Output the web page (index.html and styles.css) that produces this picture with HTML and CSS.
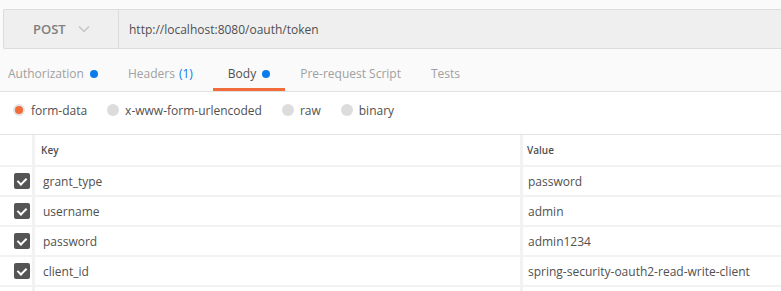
FILE: index.html
```html
<!DOCTYPE html>
<html lang="en">
<head>
  <meta charset="UTF-8" />
  <title>Request</title>
  <link rel="stylesheet" href="styles.css">
</head>
<body>

  <div class="top">
    <div class="url-bar">
      <div class="method">POST
        <svg class="chevron" width="12" height="8" viewBox="0 0 12 8"><path d="M1 1.5 L6 6.5 L11 1.5" fill="none" stroke="#c4c4c4" stroke-width="1.5"/></svg>
      </div>
      <div class="url">http://localhost:8080/oauth/token</div>
    </div>
  </div>

  <ul class="tabs">
    <li class="tab first">Authorization <span class="dot"></span></li>
    <li class="tab">Headers <span class="count">(1)</span></li>
    <li class="tab active">Body <span class="dot"></span></li>
    <li class="tab">Pre-request Script</li>
    <li class="tab">Tests</li>
  </ul>

  <div class="body-types">
    <label class="radio checked"><span class="circle"></span>form-data</label>
    <label class="radio"><span class="circle"></span>x-www-form-urlencoded</label>
    <label class="radio"><span class="circle"></span>raw</label>
    <label class="radio"><span class="circle"></span>binary</label>
  </div>

  <div class="params">
    <div class="row head">
      <div class="cell check"></div>
      <div class="cell key">Key</div>
      <div class="cell value">Value</div>
    </div>
    <div class="row">
      <div class="cell check"><span class="box"></span></div>
      <div class="cell key">grant_type</div>
      <div class="cell value">password</div>
    </div>
    <div class="row">
      <div class="cell check"><span class="box"></span></div>
      <div class="cell key">username</div>
      <div class="cell value">admin</div>
    </div>
    <div class="row">
      <div class="cell check"><span class="box"></span></div>
      <div class="cell key">password</div>
      <div class="cell value">admin1234</div>
    </div>
    <div class="row">
      <div class="cell check"><span class="box"></span></div>
      <div class="cell key">client_id</div>
      <div class="cell value">spring-security-oauth2-read-write-client</div>
    </div>
    <div class="row">
      <div class="cell check"></div>
      <div class="cell key"></div>
      <div class="cell value"></div>
    </div>
  </div>

</body>
</html>
```

FILE: styles.css
```css
body {
  margin: 0;
  font-family: "Open Sans", "Liberation Sans", sans-serif;
  font-size: 12px;
  color: #505050;
  background: #fff;
  overflow: hidden;
}
.top {
  background: #fafafa;
  padding: 9px 0 0 3px;
}
.url-bar {
  display: flex;
  height: 38px;
  background: #efefef;
  border: 1px solid #dcdcdc;
  border-right: none;
  border-radius: 2px 0 0 2px;
}
.method {
  width: 115px;
  border-right: 1px solid #dcdcdc;
  display: flex;
  align-items: center;
  padding-left: 29px;
  box-sizing: border-box;
  font-size: 13px;
  font-weight: 600;
  color: #808080;
}
.chevron { margin-left: 12px; }
.url {
  display: flex;
  align-items: center;
  padding-left: 10px;
  color: #505050;
}
.tabs {
  list-style: none;
  margin: 0;
  padding: 0;
  display: flex;
  height: 42px;
  background: #fafafa;
  border-bottom: 1px solid #e2e2e2;
}
.tab {
  padding: 10px 15px 0;
  display: flex;
  align-items: center;
  color: #a0a0a0;
  border-bottom: 3px solid transparent;
}
.tab.first { padding-left: 8px; }
.tab.active {
  color: #505050;
  border-bottom-color: #f26b3a;
}
.count { color: #097bed; margin: 0 5px 0 4px; }
.dot {
  width: 8px;
  height: 8px;
  border-radius: 50%;
  background: #097bed;
  margin-left: 6px;
}
.body-types {
  display: flex;
  align-items: center;
  height: 36px;
  padding: 0 0 6px 13px;
  border-bottom: 1px solid #e2e2e2;
}
.radio {
  display: flex;
  align-items: center;
  margin-right: 20px;
}
.circle {
  width: 12px;
  height: 12px;
  border-radius: 50%;
  background: #dcdcdc;
  margin-right: 6px;
  box-sizing: border-box;
}
.radio.checked .circle {
  background: #f26b3a;
  border: 2px solid #e4e4e4;
}
.params { background: #f2f2f2; }
.row {
  display: flex;
  height: 28px;
  margin-bottom: 2px;
}
.row.head { height: 30px; margin-bottom: 2px; }
.cell {
  background: #fff;
  display: flex;
  align-items: center;
}
.cell.check { width: 32px; margin-right: 3px; }
.cell.key { width: 485px; padding-left: 8px; box-sizing: border-box; margin-right: 3px; }
.cell.value { flex: 1; padding-left: 5px; }
.head .cell { font-size: 10px; font-weight: 600; }
.head .key { padding-left: 6px; }
.head .value { padding-left: 4px; }
.box {
  width: 16px;
  height: 16px;
  margin-left: 14px;
  border-radius: 2px;
  background: #555;
  position: relative;
}
.box::after {
  content: "";
  position: absolute;
  left: 5px;
  top: 3px;
  width: 4px;
  height: 7px;
  border: solid #fff;
  border-width: 0 2px 2px 0;
  transform: rotate(45deg);
}
```
